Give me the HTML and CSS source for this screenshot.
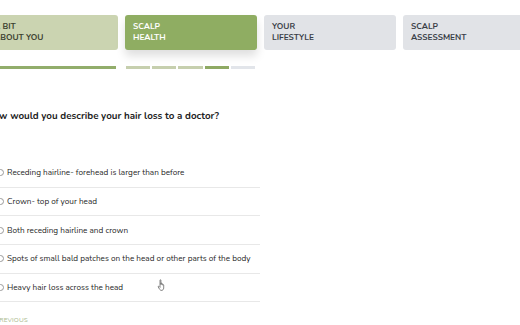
FILE: index.html
```html
<!DOCTYPE html>
<html lang="en">
<head>
  <meta charset="UTF-8">
  <meta name="viewport" content="width=device-width, initial-scale=1.0">
  <title>Hair Loss Assessment</title>
  <link rel="stylesheet" href="styles.css">
</head>
<body>
  <div class="page">
    <div class="steps">
      <div class="step">
        <div class="step-card done">A BIT<br>ABOUT YOU</div>
        <div class="bar full"></div>
      </div>
      <div class="step">
        <div class="step-card active">SCALP<br>HEALTH</div>
        <div class="bar segments">
          <span class="seg"></span>
          <span class="seg"></span>
          <span class="seg"></span>
          <span class="seg current"></span>
          <span class="seg todo"></span>
        </div>
      </div>
      <div class="step">
        <div class="step-card">YOUR<br>LIFESTYLE</div>
      </div>
      <div class="step">
        <div class="step-card">SCALP<br>ASSESSMENT</div>
      </div>
    </div>

    <h2 class="question">How would you describe your hair loss to a doctor?</h2>

    <ul class="options">
      <li class="option"><span class="radio"></span>Receding hairline- forehead is larger than before</li>
      <li class="option"><span class="radio"></span>Crown- top of your head</li>
      <li class="option"><span class="radio"></span>Both receding hairline and crown</li>
      <li class="option"><span class="radio"></span>Spots of small bald patches on the head or other parts of the body</li>
      <li class="option"><span class="radio"></span>Heavy hair loss across the head</li>
    </ul>

    <div class="prev">PREVIOUS</div>
  </div>

  <svg class="cursor" width="10" height="12" viewBox="0 0 10 12">
    <path d="M3 1.2c0-.6.9-.6.9 0V5.5l.1-1.1c0-.6.9-.6.9 0v1.2c0-.6.9-.6.9 0v.6c0-.6.9-.6.9 0V9c0 1.5-1 2.4-2.3 2.4H4.5c-.8 0-1.4-.4-1.8-1L1.2 8c-.3-.5.3-1 .8-.6L3 8.4z" fill="#fff" stroke="#555" stroke-width="0.7" stroke-linejoin="round"/>
  </svg>
</body>
</html>
```

FILE: styles.css
```css
body {
  margin: 0;
  font-family: "Nunito", "Lato", sans-serif;
  color: #2b2b2b;
  background: #ffffff;
  overflow: hidden;
}

.page {
  margin-left: -14px;
}

.steps {
  display: flex;
  gap: 7px;
  padding-top: 15px;
}

.step {
  flex: none;
  width: 132px;
}

.step-card {
  height: 35px;
  box-sizing: border-box;
  padding: 7px 8px;
  border-radius: 3px;
  background-color: #e1e3e7;
  color: #3a3f47;
  font-size: 8.3px;
  font-weight: 700;
  line-height: 10.5px;
}

.step-card.done {
  background-color: #cbd4b1;
  color: #3b4130;
}

.step-card.active {
  background-color: #8fad62;
  color: #ffffff;
  box-shadow: 0 6px 10px rgba(0, 0, 0, 0.13);
}

.bar {
  margin-top: 16px;
  height: 3px;
}

.bar.full {
  width: 130px;
  background-color: #92ad6b;
}

.bar.segments {
  display: flex;
  gap: 2px;
  margin-left: 1px;
  width: 129px;
}

.seg {
  flex: 1;
  background-color: #c6cfae;
}

.seg.current {
  background-color: #8ea963;
}

.seg.todo {
  background-color: #e2e5ea;
}

.question {
  margin: 39px 0 0;
  font-size: 9.8px;
  font-weight: 700;
  line-height: 16px;
  color: #222222;
}

.options {
  list-style: none;
  margin: 35px 0 0;
  padding: 0;
  width: 274px;
}

.option {
  display: flex;
  align-items: center;
  height: 28.7px;
  box-sizing: border-box;
  padding-left: 11px;
  border-bottom: 1px solid #e8e8e8;
  font-size: 8.2px;
  color: #1f1f1f;
}

.radio {
  width: 5px;
  height: 5px;
  border: 1px solid #9a9a9a;
  border-radius: 50%;
  margin-right: 3px;
}

.prev {
  margin-top: 13px;
  padding-left: 9px;
  font-size: 6.5px;
  letter-spacing: 0.1px;
  color: #a9b98c;
}

.cursor {
  position: absolute;
  left: 157px;
  top: 279px;
}
```
